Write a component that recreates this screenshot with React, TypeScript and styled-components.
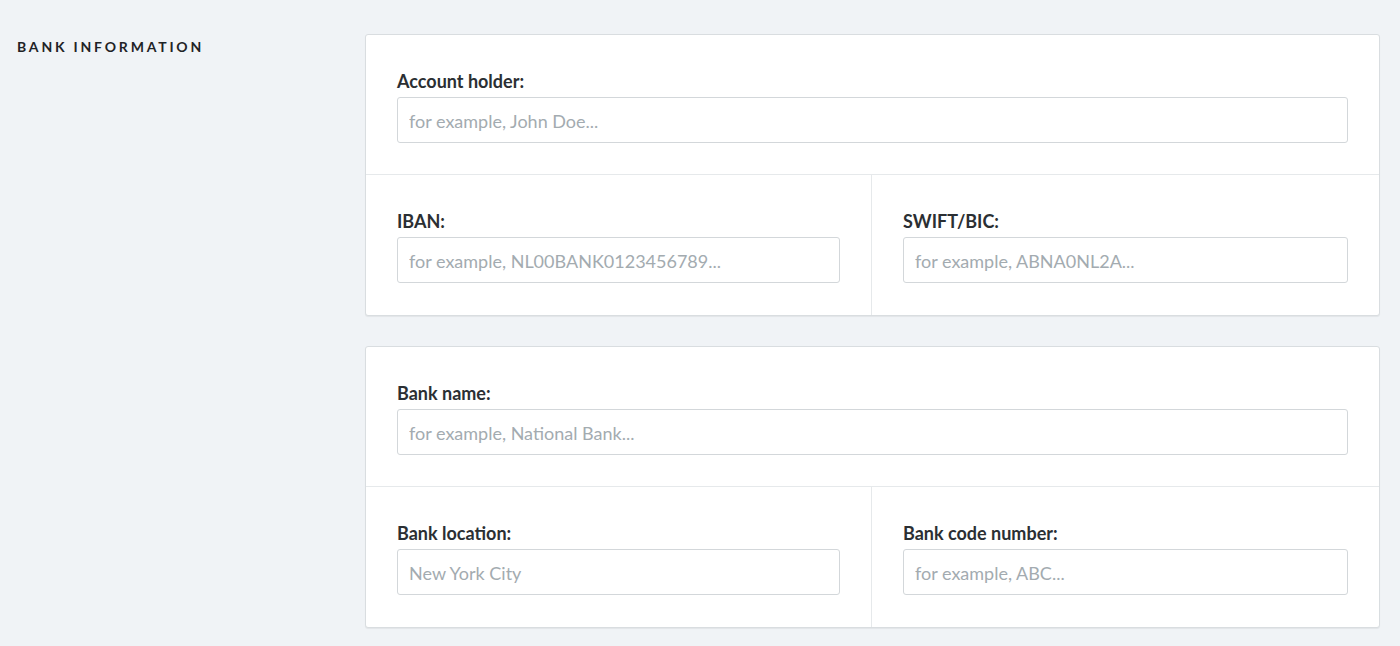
import styled, { createGlobalStyle } from 'styled-components'

const GlobalStyle = createGlobalStyle`
  html, body {
    margin: 0;
    background: #f0f3f6;
    font-family: Lato, 'Open Sans', sans-serif;
    color: #2b2f33;
  }
  * { box-sizing: border-box; }
`

const Page = styled.div`
  display: grid;
  grid-template-columns: 365px 1015px;
  padding-top: 34px;
  padding-bottom: 40px;
`

const SectionTitle = styled.h2`
  margin: 0;
  padding: 5px 0 0 17px;
  font-size: 14px;
  line-height: 16px;
  font-weight: 700;
  letter-spacing: 2.8px;
  text-transform: uppercase;
  color: #1f2326;
`

const Cards = styled.div`
  display: flex;
  flex-direction: column;
  gap: 30px;
`

const Card = styled.div`
  background: #fff;
  border: 1px solid #d9dde0;
  border-radius: 3px;
  box-shadow: 0 1px 1px rgba(0, 0, 0, 0.06);
`

const Row = styled.div<{ $split?: boolean }>`
  display: grid;
  grid-template-columns: ${({ $split }) => ($split ? '505px 1fr' : '1fr')};

  & + & {
    border-top: 1px solid #e6e9eb;
  }
`

const Field = styled.div`
  padding: 35px 31px 31px 31px;

  & + & {
    border-left: 1px solid #e6e9eb;
  }

  ${Row} + ${Row} & {
    padding-bottom: 32px;
  }
`

const Label = styled.label`
  display: block;
  margin-bottom: 5px;
  font-size: 18px;
  line-height: 22px;
  font-weight: 700;
  color: #2b2f33;
`

const Input = styled.input`
  display: block;
  width: 100%;
  height: 46px;
  padding: 1px 11px 0;
  border: 1px solid #d3d7da;
  border-radius: 3px;
  background: #fff;
  font-family: Lato, 'Open Sans', sans-serif;
  font-size: 18px;
  color: #2b2f33;
  outline: none;

  &::placeholder {
    color: #a3abb0;
  }
`

type FieldDef = { label: string; placeholder: string }

const cards: FieldDef[][][] = [
  [
    [{ label: 'Account holder:', placeholder: 'for example, John Doe...' }],
    [
      { label: 'IBAN:', placeholder: 'for example, NL00BANK0123456789...' },
      { label: 'SWIFT/BIC:', placeholder: 'for example, ABNA0NL2A...' },
    ],
  ],
  [
    [{ label: 'Bank name:', placeholder: 'for example, National Bank...' }],
    [
      { label: 'Bank location:', placeholder: 'New York City' },
      { label: 'Bank code number:', placeholder: 'for example, ABC...' },
    ],
  ],
]

export default function App() {
  return (
    <>
      <GlobalStyle />
      <Page>
        <SectionTitle>Bank information</SectionTitle>
        <Cards>
          {cards.map((rows, ci) => (
            <Card key={ci}>
              {rows.map((fields, ri) => (
                <Row key={ri} $split={fields.length > 1}>
                  {fields.map((f) => (
                    <Field key={f.label}>
                      <Label>{f.label}</Label>
                      <Input placeholder={f.placeholder} />
                    </Field>
                  ))}
                </Row>
              ))}
            </Card>
          ))}
        </Cards>
      </Page>
    </>
  )
}
